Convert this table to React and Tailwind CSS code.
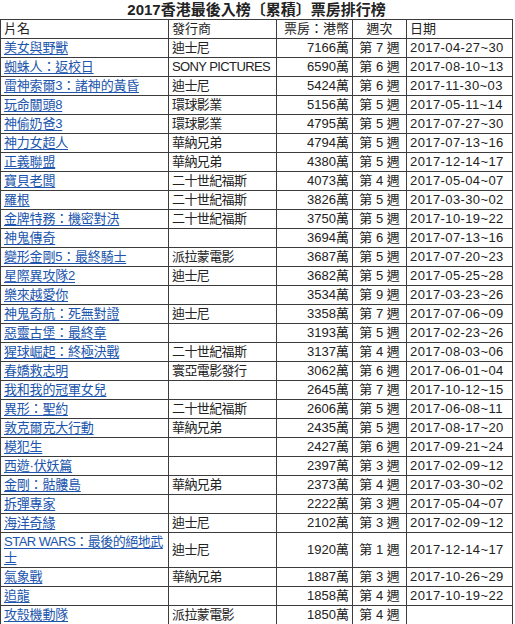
import React from 'react';

const rows = [
  ['美女與野獸', '迪士尼', '7166萬', '第 7 週', '2017-04-27~30'],
  ['蜘蛛人：返校日', 'SONY PICTURES', '6590萬', '第 6 週', '2017-08-10~13'],
  ['雷神索爾3：諸神的黃昏', '迪士尼', '5424萬', '第 6 週', '2017-11-30~03'],
  ['玩命關頭8', '環球影業', '5156萬', '第 5 週', '2017-05-11~14'],
  ['神偷奶爸3', '環球影業', '4795萬', '第 5 週', '2017-07-27~30'],
  ['神力女超人', '華納兄弟', '4794萬', '第 5 週', '2017-07-13~16'],
  ['正義聯盟', '華納兄弟', '4380萬', '第 5 週', '2017-12-14~17'],
  ['寶貝老闆', '二十世紀福斯', '4073萬', '第 4 週', '2017-05-04~07'],
  ['羅根', '二十世紀福斯', '3826萬', '第 5 週', '2017-03-30~02'],
  ['金牌特務：機密對決', '二十世紀福斯', '3750萬', '第 5 週', '2017-10-19~22'],
  ['神鬼傳奇', '', '3694萬', '第 6 週', '2017-07-13~16'],
  ['變形金剛5：最終騎士', '派拉蒙電影', '3687萬', '第 5 週', '2017-07-20~23'],
  ['星際異攻隊2', '迪士尼', '3682萬', '第 5 週', '2017-05-25~28'],
  ['樂來越愛你', '', '3534萬', '第 9 週', '2017-03-23~26'],
  ['神鬼奇航：死無對證', '迪士尼', '3358萬', '第 7 週', '2017-07-06~09'],
  ['惡靈古堡：最終章', '', '3193萬', '第 5 週', '2017-02-23~26'],
  ['猩球崛起：終極決戰', '二十世紀福斯', '3137萬', '第 4 週', '2017-08-03~06'],
  ['春嬌救志明', '寰亞電影發行', '3062萬', '第 6 週', '2017-06-01~04'],
  ['我和我的冠軍女兒', '', '2645萬', '第 7 週', '2017-10-12~15'],
  ['異形：聖約', '二十世紀福斯', '2606萬', '第 5 週', '2017-06-08~11'],
  ['敦克爾克大行動', '華納兄弟', '2435萬', '第 5 週', '2017-08-17~20'],
  ['模犯生', '', '2427萬', '第 6 週', '2017-09-21~24'],
  ['西遊·伏妖篇', '', '2397萬', '第 3 週', '2017-02-09~12'],
  ['金剛：骷髏島', '華納兄弟', '2373萬', '第 4 週', '2017-03-30~02'],
  ['拆彈專家', '', '2222萬', '第 3 週', '2017-05-04~07'],
  ['海洋奇緣', '迪士尼', '2102萬', '第 3 週', '2017-02-09~12'],
  [['STAR WARS：最後的絕地武', '士'], '迪士尼', '1920萬', '第 1 週', '2017-12-14~17'],
  ['氣象戰', '華納兄弟', '1887萬', '第 3 週', '2017-10-26~29'],
  ['追龍', '', '1858萬', '第 4 週', '2017-10-19~22'],
  ['攻殼機動隊', '派拉蒙電影', '1850萬', '第 4 週', ''],
];

const cell = 'border border-[#3c3c3c] px-[3px] py-px leading-4 align-middle font-normal';

export default function App() {
  return (
    <div
      className="w-[515px] h-[624px] bg-white text-[#222] text-[13px] overflow-hidden"
      style={{ fontFamily: '"Liberation Sans", "Noto Sans CJK TC", sans-serif' }}
    >
      <table className="w-[512px] table-fixed border-collapse">
        <caption className="h-[19px] text-[15px] font-bold leading-[19px] text-center">
          2017香港最後入榜〔累積〕票房排行榜
        </caption>
        <colgroup>
          <col className="w-[168px]" />
          <col className="w-[108px]" />
          <col className="w-[76px]" />
          <col className="w-[54px]" />
          <col className="w-[106px]" />
        </colgroup>
        <thead>
          <tr>
            <th className={`${cell} text-left`}>片名</th>
            <th className={`${cell} text-left`}>發行商</th>
            <th className={`${cell} text-right`}>票房：港幣</th>
            <th className={`${cell} text-center`}>週次</th>
            <th className={`${cell} text-left`}>日期</th>
          </tr>
        </thead>
        <tbody>
          {rows.map((r, i) => (
            <tr key={i}>
              <td className={`${cell} text-left`}>
                {Array.isArray(r[0]) ? (
                  <a href="#" className="text-[#2055ad] underline underline-offset-2 tracking-[-0.5px]">
                    <span className="whitespace-nowrap">{r[0][0]}</span>
                    <br />
                    {r[0][1]}
                  </a>
                ) : (
                  <a href="#" className="text-[#2055ad] underline underline-offset-2 tracking-[-0.2px]">
                    {r[0]}
                  </a>
                )}
              </td>
              <td className={`${cell} text-left whitespace-nowrap tracking-[-0.6px]`}>{r[1]}</td>
              <td className={`${cell} text-right`}>{r[2]}</td>
              <td className={`${cell} text-center whitespace-nowrap`}>{r[3]}</td>
              <td className={`${cell} text-left whitespace-nowrap tracking-[0.4px]`}>{r[4]}</td>
            </tr>
          ))}
        </tbody>
      </table>
    </div>
  );
}
